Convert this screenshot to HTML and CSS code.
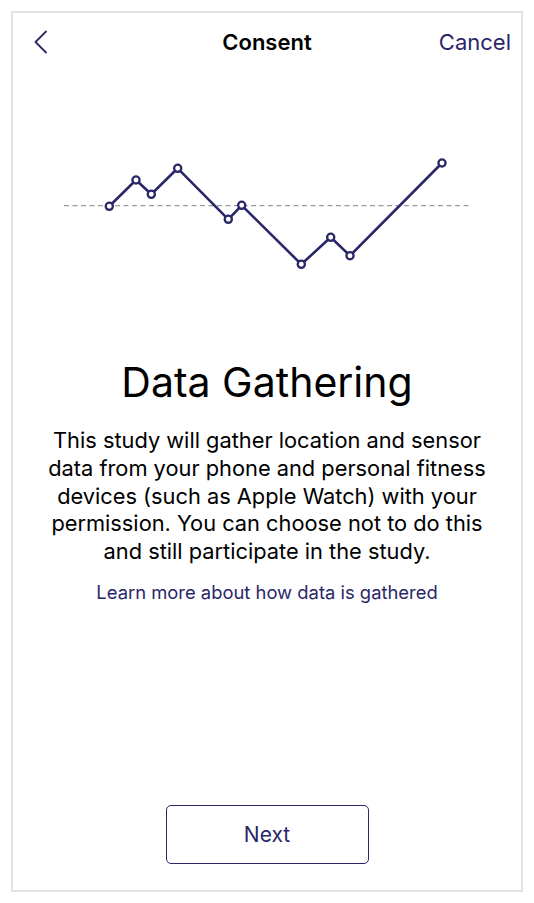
FILE: index.html
```html
<!DOCTYPE html>
<html lang="en">
<head>
<meta charset="utf-8">
<title>Consent</title>
<link rel="stylesheet" href="styles.css">
</head>
<body>
<div class="frame">
  <header class="nav">
    <button class="back" aria-label="Back">
      <svg width="14" height="24" viewBox="0 0 14 24"><polyline points="12,1.5 1.5,12 12,22.5" fill="none" stroke="#2a2768" stroke-width="1.8" stroke-linecap="round" stroke-linejoin="round"/></svg>
    </button>
    <h1 class="nav-title">Consent</h1>
    <a class="cancel" href="#">Cancel</a>
  </header>
  <svg class="chart" width="508" height="229" viewBox="13 71 508 229">
    <line x1="64" y1="205.7" x2="471" y2="205.7" stroke="#9a9aa2" stroke-width="1.3" stroke-dasharray="5 3.5"/>
    <polyline points="109.3,206.3 136,180 151.3,194.3 177.7,168.3 228.3,219.3 241.7,205.3 301.3,264.3 330.7,237.3 350,255.7 442,163" fill="none" stroke="#2a2768" stroke-width="2.6" stroke-linejoin="round"/>
    <g fill="#fff" stroke="#2a2768" stroke-width="2.3">
      <circle cx="109.3" cy="206.3" r="3.6"/>
      <circle cx="136" cy="180" r="3.6"/>
      <circle cx="151.3" cy="194.3" r="3.6"/>
      <circle cx="177.7" cy="168.3" r="3.6"/>
      <circle cx="228.3" cy="219.3" r="3.6"/>
      <circle cx="241.7" cy="205.3" r="3.6"/>
      <circle cx="301.3" cy="264.3" r="3.6"/>
      <circle cx="330.7" cy="237.3" r="3.6"/>
      <circle cx="350" cy="255.7" r="3.6"/>
      <circle cx="442" cy="163" r="3.6"/>
    </g>
  </svg>
  <h2 class="title">Data Gathering</h2>
  <p class="text">This study will gather location and sensor data from your phone and personal fitness devices (such as Apple Watch) with your permission. You can choose not to do this and still participate in the study.</p>
  <a class="learn" href="#">Learn more about how data is gathered</a>
  <div class="spacer"></div>
  <div class="actions">
    <button class="next">Next</button>
  </div>
</div>
</body>
</html>
```
FILE: styles.css
```css
* { box-sizing: border-box; }
html, body { margin: 0; padding: 0; background: #fff; }
body { font-family: Inter, "Noto Sans", "Liberation Sans", sans-serif; color: #000; }
.frame {
  margin: 11px 0 0 11px;
  width: 512px;
  height: 881px;
  border: 2px solid #e2e2e2;
  display: flex;
  flex-direction: column;
}
.nav {
  height: 58px;
  display: flex;
  align-items: center;
  justify-content: space-between;
  padding: 0 10px 0 21px;
  position: relative;
}
.back { background: none; border: 0; padding: 0; width: 14px; height: 24px; display: flex; }
.nav-title {
  position: absolute;
  left: 0; right: 0; top: 0;
  margin: 0;
  line-height: 58px;
  text-align: center;
  font-size: 22px;
  font-weight: 600;
  pointer-events: none;
}
.cancel { color: #2a2768; text-decoration: none; font-size: 22px; }
.chart { display: block; }
.title {
  margin: 60px 0 0;
  font-size: 41px;
  line-height: 45px;
  font-weight: 400;
  text-align: center;
}
.text {
  margin: 22px 29px 0;
  font-size: 21.8px;
  line-height: 27.8px;
  text-align: center;
}
.learn {
  margin-top: 15px;
  align-self: center;
  color: #2a2768;
  text-decoration: none;
  font-size: 18.4px;
}
.spacer { flex: 1; }
.actions { display: flex; justify-content: center; padding-bottom: 26px; }
.next {
  width: 203px;
  height: 59px;
  border: 1.5px solid #2a2768;
  border-radius: 5px;
  background: #fff;
  color: #2a2768;
  font-family: inherit;
  font-size: 21px;
}
```
